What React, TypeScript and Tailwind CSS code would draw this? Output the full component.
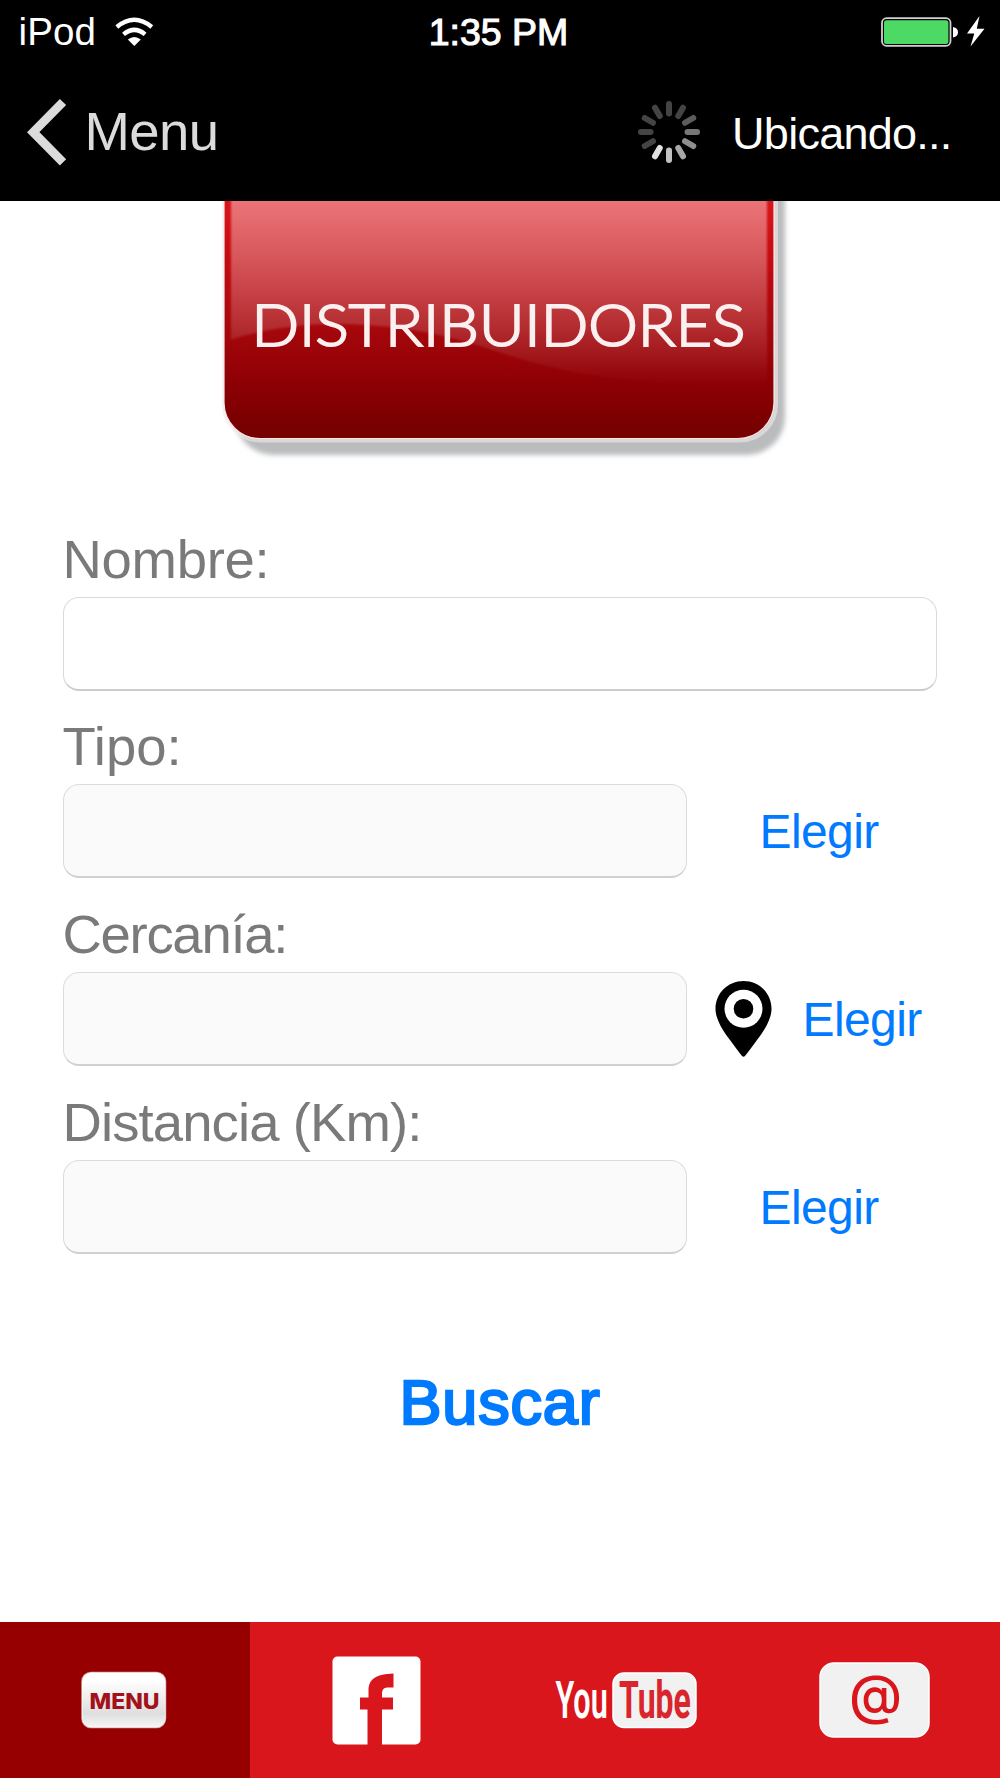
import React from "react";

const SPINNER = ["#444", "#444", "#5c5c5c", "#777", "#8f8f8f", "#a8a8a8", "#c2c2c2", "#e2e2e2", "#444", "#444", "#444", "#444"];

function StatusBar() {
  return (
    <div className="flex h-[62px] items-center justify-between pt-[2px] text-[38.5px] leading-[60px] text-white">
      <div className="flex w-[330px] items-center pl-[18.5px]">
        <span className="tracking-[0.1px]">iPod</span>
        <svg className="ml-[18.5px] h-[30px] w-[42px]" viewBox="115 16 42 30">
          <path d="M135.3 45 L128.8 38.6 Q135.3 33.6 141.8 38.6 Z" fill="#fff" />
          <path d="M124.5 33.4 Q135.3 24.4 146.1 33.4" fill="none" stroke="#fff" strokeWidth="4.4" />
          <path d="M117.8 26 Q135.3 11.6 152.8 26" fill="none" stroke="#fff" strokeWidth="4.4" />
        </svg>
      </div>
      <span className="pr-[3px] text-[37.5px] tracking-[0px] [-webkit-text-stroke:1.1px_#fff]">1:35 PM</span>
      <div className="flex w-[330px] items-center justify-end pr-[13px]">
        <svg className="h-[34px] w-[108px]" viewBox="879 15 108 34">
          <rect x="882" y="18.2" width="68.5" height="27.6" rx="4.5" fill="none" stroke="#d0d0d0" strokeWidth="1.8" />
          <rect x="884" y="20.3" width="64.4" height="23.6" rx="2.5" fill="#4cd964" />
          <path d="M953 27 Q958 28 958 32.3 Q958 36.6 953 37.6 Z" fill="#fff" />
          <path d="M979.5 16 L967 33.6 L974.3 33.6 L970.5 46.5 L984.5 28.8 L976.8 28.8 Z" fill="#fff" />
        </svg>
      </div>
    </div>
  );
}

function NavBar() {
  return (
    <div className="flex h-[138px] items-start justify-between">
      <button className="flex items-center pl-[25.5px] pt-[32px] text-[54.5px] leading-[76px] tracking-[-0.6px] text-[#dbdbdb]">
        <svg className="mr-[18px] h-[70px] w-[41px]" viewBox="26 96 41 70">
          <path d="M63 101 L33.2 131.2 L63 161.4" fill="none" stroke="#dbdbdb" strokeWidth="8.8" />
        </svg>
        Menu
      </button>
      <div className="flex items-center pr-[48.5px] pt-[32px]">
        <svg className="mr-[30.5px] h-[66px] w-[66px]" viewBox="-33 -33 66 66">
          {SPINNER.map((c, i) => (
            <line key={i} x1="0" y1="-18.5" x2="0" y2="-28" stroke={c} strokeWidth="6" strokeLinecap="round" transform={`rotate(${i * 30})`} />
          ))}
        </svg>
        <span className="pt-[4px] text-[45px] leading-[72px] tracking-[-0.75px] text-white">Ubicando...</span>
      </div>
    </div>
  );
}

function Banner() {
  return (
    <svg className="mx-auto block h-[320px] w-[600px]" viewBox="200 200 600 320">
      <defs>
        <linearGradient id="base" gradientUnits="userSpaceOnUse" x1="0" y1="200" x2="0" y2="438">
          <stop offset="0" stopColor="#dc141a" />
          <stop offset="0.25" stopColor="#c30b11" />
          <stop offset="0.54" stopColor="#a5070b" />
          <stop offset="0.76" stopColor="#8e0005" />
          <stop offset="0.95" stopColor="#780000" />
        </linearGradient>
        <linearGradient id="gloss" gradientUnits="userSpaceOnUse" x1="0" y1="200" x2="0" y2="385">
          <stop offset="0" stopColor="#fff" stopOpacity="0.41" />
          <stop offset="0.33" stopColor="#fff" stopOpacity="0.3" />
          <stop offset="0.7" stopColor="#fff" stopOpacity="0.14" />
          <stop offset="1" stopColor="#fff" stopOpacity="0" />
        </linearGradient>
        <filter id="soft" x="-10%" y="-10%" width="120%" height="120%">
          <feGaussianBlur stdDeviation="2.8" />
        </filter>
        <filter id="edge" x="-5%" y="-5%" width="110%" height="110%">
          <feGaussianBlur stdDeviation="1" />
        </filter>
      </defs>
      <rect x="235" y="150" width="550" height="304" rx="38" fill="#b9bbbd" filter="url(#soft)" />
      <rect x="224" y="100" width="552" height="339.5" rx="36" fill="none" stroke="#f4e8e8" strokeOpacity="0.6" strokeWidth="4" />
      <path d="M224 190 V402 A36 36 0 0 0 260 437.5 H738 A36 36 0 0 0 774 402 V190 Z" fill="url(#base)" stroke="#f3e9e9" strokeWidth="1.2" />
      <path d="M231 190 V338.5 C275 325 320 321 365 324 C420 327 460 338 502 352 C560 371 620 384 767 386 V190 Z" fill="url(#gloss)" filter="url(#edge)" />
      <text x="251.5" y="344.5" fill="#fbf0f0" stroke="#fbf0f0" strokeWidth="2" fontSize="57" fontWeight="300" fontFamily="Lato, sans-serif" textLength="494" lengthAdjust="spacingAndGlyphs">DISTRIBUIDORES</text>
    </svg>
  );
}

function Field({ label, spacing, wide, children }: { label: string; spacing: string; wide?: boolean; children?: React.ReactNode }) {
  return (
    <div className="flex h-[187.7px] flex-col">
      <label className={`pt-[1px] text-[54.5px] leading-[75px] whitespace-nowrap text-[#7a7a7a] ${spacing}`}>{label}</label>
      <div className="flex items-center">
        <div
          className={
            wide
              ? "h-[94px] w-[874.5px] rounded-[16px] border-[1.5px] border-[#d9d9d9] border-b-[2px] border-b-[#cccccc] bg-white"
              : "h-[94px] w-[624.5px] shrink-0 rounded-[16px] border-[1.5px] border-[#dcdcdc] border-b-[2px] border-b-[#d0d0d0] bg-[#fafafa]"
          }
        />
        {children}
      </div>
    </div>
  );
}

function Choose({ className }: { className: string }) {
  return <button className={`pt-[2px] text-[48px] leading-[76px] tracking-[-0.6px] text-[#007aff] ${className}`}>Elegir</button>;
}

function TabBar() {
  return (
    <nav className="mt-auto grid h-[156.5px] grid-cols-4 bg-[#d9161c]">
      <div className="flex justify-center bg-[#960000]">
        <svg className="h-full w-[250px]" viewBox="0 1621.5 250 156.5">
          <defs>
            <linearGradient id="btn" x1="0" y1="0" x2="0" y2="1">
              <stop offset="0.15" stopColor="#fff" />
              <stop offset="0.75" stopColor="#dedede" />
              <stop offset="1" stopColor="#f6f6f6" />
            </linearGradient>
          </defs>
          <rect x="82" y="1672" width="83.5" height="55" rx="9" fill="url(#btn)" stroke="#fff" strokeOpacity="0.65" strokeWidth="1.5" />
          <text x="89.5" y="1708.5" fill="#a3121a" fontSize="22" fontWeight="800" fontFamily="Inter, sans-serif" textLength="70" lengthAdjust="spacingAndGlyphs">MENU</text>
        </svg>
      </div>
      <svg className="h-full w-[250px]" viewBox="250 1621.5 250 156.5">
        <rect x="332.5" y="1656" width="88" height="88" rx="5" fill="#fff" />
        <path d="M367.5 1745 V1709 H360 V1697 H368.5 V1690 C368.5 1678 377 1673.5 393.5 1673 V1687 H388 C384 1687 382 1689 382 1693 V1697 H393 V1709 H382 V1745 Z" fill="#d9161c" />
      </svg>
      <svg className="h-full w-[250px]" viewBox="500 1621.5 250 156.5">
        <text transform="translate(555.5 1717.5) scale(0.58 1)" fill="#fff" fontSize="51" fontWeight="600" fontFamily="Roboto, sans-serif" textLength="90" lengthAdjust="spacingAndGlyphs">You</text>
        <rect x="613" y="1672.5" width="83" height="54.5" rx="11" fill="#f1f1f1" stroke="#fff" strokeWidth="1.5" />
        <text transform="translate(619 1717.5) scale(0.62 1)" fill="#d9252b" fontSize="51" fontWeight="700" fontFamily="Roboto, sans-serif" textLength="116" lengthAdjust="spacingAndGlyphs">Tube</text>
      </svg>
      <svg className="h-full w-[250px]" viewBox="750 1621.5 250 156.5">
        <rect x="820" y="1662.5" width="109" height="74" rx="14" fill="#f1f1f1" stroke="#fff" strokeWidth="1.5" />
        <text x="875.5" y="1713.5" textAnchor="middle" fill="#d9161c" fontSize="54" fontWeight="500" fontFamily="Inter, sans-serif">@</text>
      </svg>
    </nav>
  );
}

export default function App() {
  return (
    <div className="flex h-[1778px] w-[1000px] flex-col overflow-hidden bg-white font-['Liberation_Sans',Arial,sans-serif]">
      <header className="h-[200.5px] shrink-0 bg-black">
        <StatusBar />
        <NavBar />
      </header>
      <Banner />
      <main className="flex flex-col pl-[62.5px]">
        <Field label="Nombre:" spacing="tracking-[-0.3px]" wide />
        <Field label="Tipo:" spacing="tracking-[0px]">
          <Choose className="ml-[72.5px]" />
        </Field>
        <Field label="Cercanía:" spacing="tracking-[-1.3px]">
          <svg className="ml-[28px] h-[76px] w-[57px]" viewBox="0 0 57 76">
            <path d="M28.5 0 C44 0 56.5 12 56.5 28 C56.5 38 49 50 42 59 Q34 70 30 75 Q28.5 76.5 27 75 Q23 70 15 59 C8 50 0.5 38 0.5 28 C0.5 12 13 0 28.5 0 Z" />
            <circle cx="28.5" cy="27.7" r="19" fill="#fff" />
            <circle cx="28.5" cy="27.7" r="9.8" />
          </svg>
          <Choose className="ml-[30.5px]" />
        </Field>
        <Field label="Distancia (Km):" spacing="tracking-[-0.9px]">
          <Choose className="ml-[72.5px]" />
        </Field>
      </main>
      <button className="mx-auto mt-[91px] text-[63px] leading-[80px] tracking-[0.8px] text-[#007aff] [-webkit-text-stroke:2.4px_#007aff]">Buscar</button>
      <TabBar />
    </div>
  );
}
